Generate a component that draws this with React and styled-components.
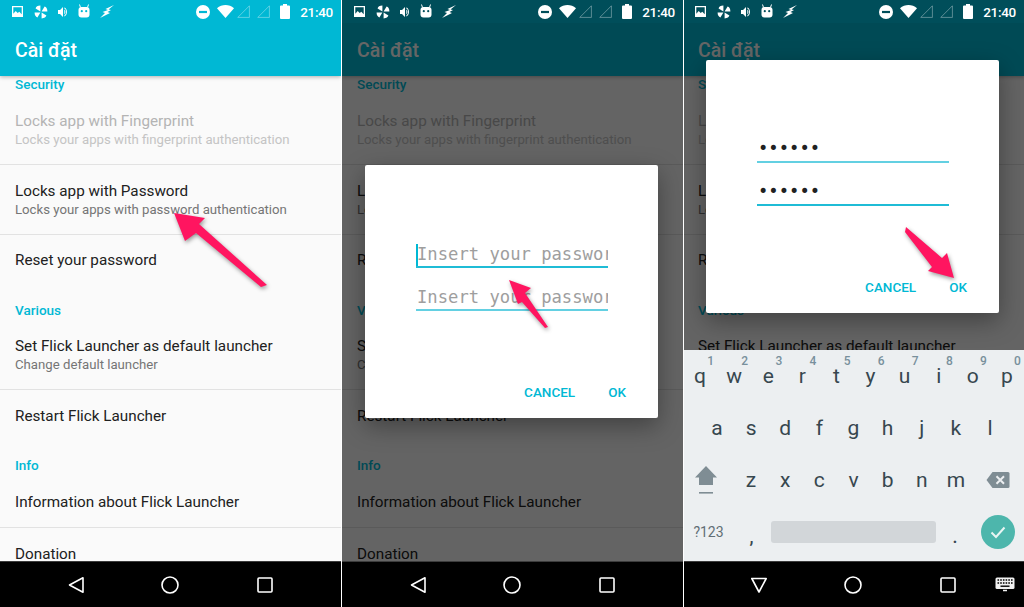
import styled, { createGlobalStyle } from "styled-components";

const GlobalStyle = createGlobalStyle`
  html, body {
    margin: 0;
    padding: 0;
    height: 100%;
    overflow: hidden;
    background: #fff;
    font-family: Roboto, "Noto Sans", sans-serif;
  }
`;

const Page = styled.div`
  display: flex;
  gap: 1px;
  width: 1024px;
  height: 607px;
`;

const Phone = styled.div`
  position: relative;
  display: flex;
  flex-direction: column;
  flex: 0 0 341px;
  height: 607px;
  overflow: hidden;
  margin-left: ${(p) => (p.$last ? "-1px" : "0")};
  &::before {
    content: "";
    display: ${(p) => (p.$last ? "block" : "none")};
    position: absolute;
    z-index: 5;
    left: 0;
    top: 0;
    bottom: 0;
    width: 1px;
    background: #fff;
  }
`;

const StatusBar = styled.div`
  flex: 0 0 23px;
  display: flex;
  align-items: center;
  justify-content: space-between;
  padding: 0 8px 0 11px;
  background: ${(p) => (p.$dim ? "#004e5a" : "#00b8d4")};
  color: #fff;
`;

const IconGroup = styled.div`
  display: flex;
  align-items: center;
  gap: ${(p) => p.$gap}px;
`;

const Clock = styled.span`
  font-size: 13.5px;
  font-weight: 500;
  letter-spacing: -0.3px;
`;

const Screen = styled.div`
  position: relative;
  flex: 1;
  min-height: 0;
  overflow: hidden;
  display: flex;
  flex-direction: column;
  background: #fafafa;
`;

const AppBar = styled.div`
  position: relative;
  z-index: 1;
  flex: 0 0 53px;
  box-sizing: border-box;
  display: flex;
  align-items: center;
  padding: 1px 15px 0;
  background: #00b8d4;
  color: #fff;
  font-size: 19.5px;
  font-weight: 500;
  box-shadow: 0 1px 4px rgba(0, 0, 0, 0.3);
`;

const Category = styled.div`
  flex: none;
  height: ${(p) => p.$height}px;
  display: flex;
  align-items: flex-end;
  padding: 0 15px 1px;
  box-sizing: border-box;
  line-height: 20px;
  color: #00b8d4;
  font-size: 13.5px;
  font-weight: 500;
`;

const Row = styled.div`
  flex: none;
  height: ${(p) => p.$height}px;
  box-sizing: border-box;
  display: flex;
  flex-direction: column;
  justify-content: center;
  padding: 0 15px;
  border-bottom: ${(p) => (p.$divider ? "1px solid #e2e2e2" : "0")};
`;

const RowTitle = styled.div`
  font-size: 15.25px;
  line-height: 20px;
  color: ${(p) => (p.$disabled ? "#b4b4b4" : "#212121")};
`;

const RowSub = styled.div`
  font-size: 13.2px;
  line-height: 18px;
  color: ${(p) => (p.$disabled ? "#c4c4c4" : "#757575")};
`;

const Scrim = styled.div`
  position: absolute;
  z-index: 2;
  inset: 0;
  padding: 0 2px 1px 0;
  display: flex;
  align-items: center;
  justify-content: center;
  background: rgba(0, 0, 0, 0.6);
`;

const Dialog = styled.div`
  width: 293px;
  height: 253px;
  box-sizing: border-box;
  padding: 77px 32px 14px 51px;
  display: flex;
  flex-direction: column;
  gap: 17px;
  background: #fff;
  border-radius: 2px;
  box-shadow: 0 8px 24px rgba(0, 0, 0, 0.35);
`;

const Field = styled.div`
  position: relative;
  width: 192px;
  height: 26px;
  box-sizing: border-box;
  overflow: hidden;
  white-space: nowrap;
  padding-left: 1px;
  font-family: "DejaVu Sans Mono", monospace;
  font-size: 17.2px;
  line-height: ${(p) => (p.$filled ? 22 : 24)}px;
  color: ${(p) => (p.$filled ? "#212121" : "#9e9e9e")};
  border-bottom: 2px solid ${(p) => (p.$focused ? "#1fbcd6" : "#63d0e2")};
`;

const Caret = styled.span`
  position: absolute;
  left: 0;
  top: 2px;
  bottom: 0;
  width: 2px;
  background: #00b8d4;
`;

const DialogActions = styled.div`
  margin-top: auto;
  display: flex;
  justify-content: flex-end;
  gap: 33px;
`;

const TextButton = styled.span`
  font-size: 13.5px;
  line-height: 24px;
  font-weight: 500;
  color: #00b8d4;
`;

const Keyboard = styled.div`
  flex: 0 0 211px;
  box-sizing: border-box;
  padding-bottom: 3px;
  display: flex;
  flex-direction: column;
  background: #eceff1;
  color: #37474f;
  font-size: 21px;
`;

const KeyRow = styled.div`
  flex: 1;
  display: flex;
  padding: 0 ${(p) => p.$inset || 0}px;
`;

const Key = styled.div`
  position: relative;
  flex: ${(p) => p.$grow || "1 1 0"};
  box-sizing: border-box;
  display: flex;
  align-items: center;
  justify-content: center;
  min-width: 0;
`;

const ShiftKey = styled(Key)`
  padding-right: 5px;
`;

const KeyHint = styled.span`
  position: absolute;
  top: 4px;
  right: 3px;
  font-size: 12px;
  font-weight: 500;
  color: #78909c;
`;

const ModeKey = styled(Key)`
  font-size: 14px;
  color: #616e75;
`;

const PunctKey = styled(Key)`
  padding-top: 9px;
  padding-right: ${(p) => p.$nudge || 0}px;
  font-size: 18px;
  font-weight: 500;
`;

const SpaceBar = styled.div`
  flex: 0 0 165px;
  height: 22px;
  align-self: center;
  border-radius: 3px;
  background: #d2d6d9;
`;

const EnterKey = styled.div`
  flex: 0 0 34px;
  height: 34px;
  align-self: center;
  margin: 0 9px 0 7px;
  border-radius: 50%;
  background: #4db6ac;
  display: flex;
  align-items: center;
  justify-content: center;
`;

const NavBar = styled.div`
  position: relative;
  flex: 0 0 46px;
  box-sizing: border-box;
  padding-right: 1px;
  display: flex;
  align-items: center;
  justify-content: center;
  gap: 70.5px;
  background: #000;
  border-top: 1px solid #3c3c3c;
`;

const NavExtra = styled.div`
  position: absolute;
  right: 9px;
  top: 15px;
  display: flex;
`;

const ArrowLayer = styled.svg`
  position: absolute;
  z-index: 4;
  inset: 0;
  width: 100%;
  height: 100%;
  pointer-events: none;
`;

const ArrowShape = styled.polygon`
  fill: #ff1560;
  filter: drop-shadow(1px 2px 2px rgba(0, 0, 0, 0.4));
`;

const ImageIcon = () => (
  <svg width="13" height="13" viewBox="0 0 13 13">
    <path
      fillRule="evenodd"
      fill="#fff"
      d="M1 1h11v11H1zM2.300 2.300v6.400l2.400-2.600 2 2 1.600-1.400 2.400 2.600V2.300z"
    />
  </svg>
);

const PinwheelIcon = () => (
  <svg width="14" height="14" viewBox="0 0 14 14" fill="#fff">
    <path d="M6.400 6.400V.6C3.600.6 2 1.800 1.600 3.400zM7.600 6.400h5.800c0-2.800-1.200-4.400-2.800-4.800zM7.600 7.600v5.800c2.800 0 4.400-1.200 4.800-2.800zM6.400 7.600H.6c0 2.800 1.200 4.400 2.800 4.800z" />
  </svg>
);

const VolumeIcon = () => (
  <svg width="10" height="12" viewBox="0 0 10 12" fill="#fff">
    <path d="M0 4h2l3-3v10L2 8H0z" />
    <path d="M6.300 3.600c1.600.8 1.600 4 0 4.800zM6.300 1.600c3.600 1 3.600 7.800 0 8.800V9.400c2.400-1 2.400-5.800 0-6.800z" />
  </svg>
);

const AndroidIcon = ({ eye }) => (
  <svg width="12" height="15" viewBox="0 0 12 15">
    <path d="M2.500 3.500 1.500.5M9.500 3.500l1-3" stroke="#fff" strokeWidth="1" />
    <rect x="0.500" y="3" width="11" height="10.500" rx="3" fill="#fff" />
    <circle cx="3.800" cy="7.200" r="1.100" fill={eye} />
    <circle cx="8.200" cy="7.200" r="1.100" fill={eye} />
  </svg>
);

const BoltIcon = () => (
  <svg width="14" height="13" viewBox="0 0 14 13" fill="#fff">
    <path d="M14 0 5.500 4 8 5 2.500 7 5 8 0 13 10 8 7.500 7 11 5 8.500 4.400z" />
  </svg>
);

const DndIcon = ({ bar }) => (
  <svg width="14" height="14" viewBox="0 0 14 14">
    <circle cx="7" cy="7" r="7" fill="#fff" />
    <rect x="3" y="5.900" width="8" height="2.200" fill={bar} />
  </svg>
);

const WifiIcon = () => (
  <svg width="17" height="13" viewBox="0 0 17 13" fill="#fff">
    <path d="M0 3.200C4.800-1 12.200-1 17 3.200L8.500 13z" />
  </svg>
);

const SignalIcon = () => (
  <svg width="13" height="13" viewBox="0 0 13 13" fill="none">
    <path d="M.8 12.400 12.400.8v11.600z" stroke="#fff" strokeOpacity="0.35" />
  </svg>
);

const BatteryIcon = () => (
  <svg width="10" height="15" viewBox="0 0 10 15" fill="#fff">
    <path d="M3 0h4v1.500h2a1 1 0 0 1 1 1V14a1 1 0 0 1-1 1H1a1 1 0 0 1-1-1V2.500a1 1 0 0 1 1-1h2z" />
  </svg>
);

const BackIcon = ({ down }) => (
  <svg width="24" height="24" viewBox="0 0 24 24" fill="none" stroke="#fff" strokeWidth="1.600">
    {down ? (
      <path d="M4.800 5.500h14.400L12 19z" strokeLinejoin="round" />
    ) : (
      <path d="M19 4.800v14.400L5.500 12z" strokeLinejoin="round" />
    )}
  </svg>
);

const HomeIcon = () => (
  <svg width="24" height="24" viewBox="0 0 24 24" fill="none" stroke="#fff" strokeWidth="1.600">
    <circle cx="12" cy="12" r="8" />
  </svg>
);

const RecentIcon = () => (
  <svg width="24" height="24" viewBox="0 0 24 24" fill="none" stroke="#fff" strokeWidth="1.600">
    <rect x="5" y="5" width="14" height="14" rx="1" />
  </svg>
);

const KeyboardIcon = () => (
  <svg width="20" height="15" viewBox="0 0 20 15">
    <rect x="0.500" y="0.500" width="19" height="11.500" rx="1.500" fill="#f1f1f1" />
    <path
      d="M2.500 3h1.600M5.200 3h1.600M7.900 3h1.600M10.600 3h1.600M13.300 3h1.600M16 3h1.600M2.500 6h1.600M5.200 6h1.600M7.900 6h1.600M10.600 6h1.600M13.300 6h1.600M16 6h1.600"
      stroke="#000"
      strokeWidth="1.400"
    />
    <path d="M5.500 9.200h9" stroke="#000" strokeWidth="1.400" />
    <path d="M8 13.500h4" stroke="#f1f1f1" strokeWidth="1.500" />
  </svg>
);

const ShiftIcon = () => (
  <svg width="22" height="28" viewBox="0 0 22 28" fill="#7f8d94">
    <path d="M11 0 22 11.500h-4V19H4v-7.500H0z" />
    <rect x="4" y="26" width="14" height="1.600" />
  </svg>
);

const BackspaceIcon = () => (
  <svg width="24" height="18" viewBox="0 0 24 18">
    <path fill="#7f8d94" d="M6.500 1H22a1.500 1.500 0 0 1 1.500 1.500v13A1.500 1.500 0 0 1 22 17H6.500L.5 9z" />
    <path d="M10.500 5.200 18 12.800M18 5.200l-7.500 7.600" stroke="#eceff1" strokeWidth="2" />
  </svg>
);

const CheckIcon = () => (
  <svg width="18" height="18" viewBox="0 0 18 18" fill="none">
    <path d="M2.500 9.500 7 14l8.500-9.500" stroke="#e8f5f3" strokeWidth="2" />
  </svg>
);

const SettingsList = () => (
  <>
    <AppBar>Cài đặt</AppBar>
    <Category $height={19}>Security</Category>
    <Row $height={70} $divider>
      <RowTitle $disabled>Locks app with Fingerprint</RowTitle>
      <RowSub $disabled>Locks your apps with fingerprint authentication</RowSub>
    </Row>
    <Row $height={70} $divider>
      <RowTitle>Locks app with Password</RowTitle>
      <RowSub>Locks your apps with password authentication</RowSub>
    </Row>
    <Row $height={50}>
      <RowTitle>Reset your password</RowTitle>
    </Row>
    <Category $height={36}>Various</Category>
    <Row $height={69} $divider>
      <RowTitle>Set Flick Launcher as default launcher</RowTitle>
      <RowSub>Change default launcher</RowSub>
    </Row>
    <Row $height={52}>
      <RowTitle>Restart Flick Launcher</RowTitle>
    </Row>
    <Category $height={34}>Info</Category>
    <Row $height={52} $divider>
      <RowTitle>Information about Flick Launcher</RowTitle>
    </Row>
    <Row $height={52}>
      <RowTitle>Donation</RowTitle>
    </Row>
  </>
);

const Status = ({ dim }) => {
  const tint = dim ? "#004e5a" : "#00b8d4";
  return (
    <StatusBar $dim={dim}>
      <IconGroup $gap={10}>
        <ImageIcon />
        <PinwheelIcon />
        <VolumeIcon />
        <AndroidIcon eye={tint} />
        <BoltIcon />
      </IconGroup>
      <IconGroup $gap={10}>
        <IconGroup $gap={7}>
          <DndIcon bar={tint} />
          <IconGroup $gap={3}>
            <WifiIcon />
            <SignalIcon />
          </IconGroup>
          <SignalIcon />
        </IconGroup>
        <BatteryIcon />
        <Clock>21:40</Clock>
      </IconGroup>
    </StatusBar>
  );
};

const Nav = ({ imeOpen }) => (
  <NavBar>
    <BackIcon down={imeOpen} />
    <HomeIcon />
    <RecentIcon />
    {imeOpen && (
      <NavExtra>
        <KeyboardIcon />
      </NavExtra>
    )}
  </NavBar>
);

const Arrow = ({ points }) => (
  <ArrowLayer viewBox="0 0 341 607">
    <ArrowShape points={points} />
  </ArrowLayer>
);

const PasswordDialog = ({ filled }) => {
  const text = filled ? "••••••" : "Insert your password";
  return (
    <Dialog>
      <Field $focused={!filled} $filled={filled}>
        {!filled && <Caret />}
        {text}
      </Field>
      <Field $focused={filled} $filled={filled}>
        {text}
      </Field>
      <DialogActions>
        <TextButton>CANCEL</TextButton>
        <TextButton>OK</TextButton>
      </DialogActions>
    </Dialog>
  );
};

const topRow = [
  ["q", 1], ["w", 2], ["e", 3], ["r", 4], ["t", 5],
  ["y", 6], ["u", 7], ["i", 8], ["o", 9], ["p", 0],
];

const SoftKeyboard = () => (
  <Keyboard>
    <KeyRow>
      {topRow.map(([letter, hint]) => (
        <Key key={letter}>
          {letter}
          <KeyHint>{hint}</KeyHint>
        </Key>
      ))}
    </KeyRow>
    <KeyRow $inset={17}>
      {"asdfghjkl".split("").map((letter) => (
        <Key key={letter}>{letter}</Key>
      ))}
    </KeyRow>
    <KeyRow>
      <ShiftKey $grow="0 0 51px">
        <ShiftIcon />
      </ShiftKey>
      {"zxcvbnm".split("").map((letter) => (
        <Key key={letter}>{letter}</Key>
      ))}
      <Key $grow="0 0 51px">
        <BackspaceIcon />
      </Key>
    </KeyRow>
    <KeyRow>
      <ModeKey $grow="0 0 51px">?123</ModeKey>
      <PunctKey $grow="0 0 37px" $nudge={2}>,</PunctKey>
      <SpaceBar />
      <PunctKey $grow="0 0 38px">.</PunctKey>
      <EnterKey>
        <CheckIcon />
      </EnterKey>
    </KeyRow>
  </Keyboard>
);

export default function App() {
  return (
    <>
      <GlobalStyle />
      <Page>
        <Phone>
          <Status />
          <Screen>
            <SettingsList />
          </Screen>
          <Nav />
          <Arrow points="174,213 205,218 199,224 267,285 261,287 196,233 185,241" />
        </Phone>
        <Phone>
          <Status dim />
          <Screen>
            <SettingsList />
            <Scrim>
              <PasswordDialog />
            </Scrim>
          </Screen>
          <Nav />
          <Arrow points="167,280 189,288 183,293 206,327 203,328 180,302 176,304" />
        </Phone>
        <Phone $last>
          <Status dim />
          <Screen>
            <SettingsList />
            <Scrim>
              <PasswordDialog filled />
            </Scrim>
          </Screen>
          <SoftKeyboard />
          <Nav imeOpen />
          <Arrow points="271,278 264,253 259,258 223,227 222,232 249,267 245,271" />
        </Phone>
      </Page>
    </>
  );
}
